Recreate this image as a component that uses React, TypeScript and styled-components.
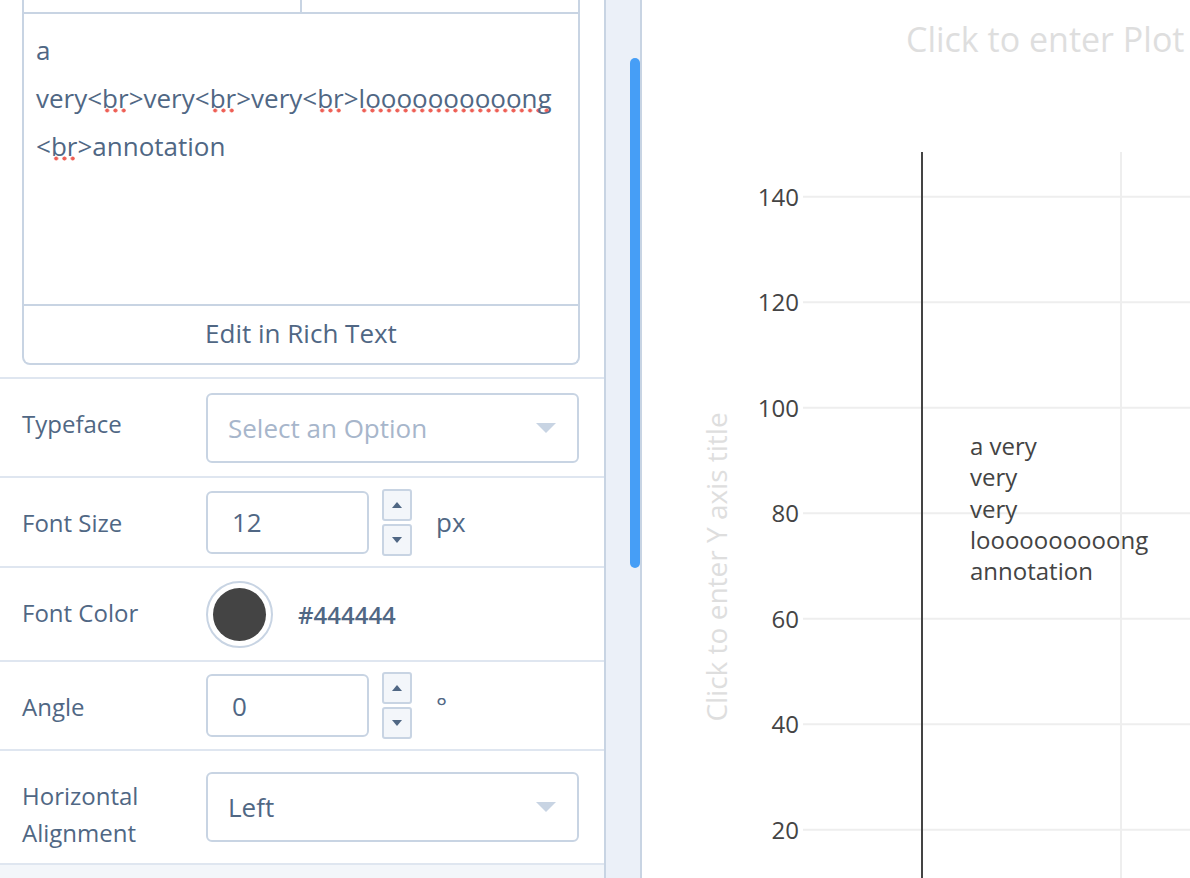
import React from "react";
import styled, { createGlobalStyle } from "styled-components";

const GlobalStyle = createGlobalStyle`
  html, body { margin: 0; padding: 0; height: 100%; overflow: hidden; background: #fff; }
  body { font-family: "Open Sans", "Liberation Sans", Arial, sans-serif; }
  #root { height: 100%; }
  *, *::before, *::after { box-sizing: border-box; }
`;

const Page = styled.div`
  display: flex;
  width: 1190px;
  height: 878px;
  overflow: hidden;
`;

const Panel = styled.div`
  width: 606px;
  flex: none;
  display: flex;
  flex-direction: column;
  background: #fff;
  border-right: 2px solid #c8d4e3;
  overflow: hidden;
  color: #506784;
`;

const Track = styled.div`
  width: 36px;
  flex: none;
  display: flex;
  justify-content: flex-end;
  padding-top: 58px;
  background: #ebf0f8;
  border-right: 2px solid #c8d4e3;
`;

const Thumb = styled.div`
  width: 10px;
  height: 510px;
  border-radius: 5px;
  background: #469ef6;
`;

const TextBox = styled.div`
  margin: 0 24px 0 22px;
  display: flex;
  flex-direction: column;
  border: 2px solid #c8d4e3;
  border-top: none;
  border-radius: 0 0 8px 8px;
`;

const Tabs = styled.div`
  display: flex;
  height: 14px;
  border-bottom: 2px solid #c8d4e3;
`;

const Tab = styled.div`
  flex: 1;
  & + & {
    border-left: 2px solid #c8d4e3;
  }
`;

const TextArea = styled.div`
  height: 290px;
  padding: 12px 12px;
  font-size: 26px;
  line-height: 48px;
  color: #506784;
  background: #fff;
`;

const Misspelled = styled.span`
  background-image: radial-gradient(circle at center, #ee5f55 0, #ee5f55 1.7px, rgba(238, 95, 85, 0) 2.3px);
  background-size: 8.3px 5px;
  background-repeat: repeat-x;
  background-position: 1px calc(100% - 3px);
`;

const RichButton = styled.div`
  height: 59px;
  padding-bottom: 3px;
  display: flex;
  align-items: center;
  justify-content: center;
  font-size: 26px;
  color: #506784;
  border-top: 2px solid #c8d4e3;
`;

const Fields = styled.div`
  margin-top: 12px;
  border-top: 2px solid #dfe6f0;
  display: flex;
  flex-direction: column;
`;

const Row = styled.div`
  display: flex;
  align-items: flex-start;
  padding: 0 25px 0 22px;
  border-bottom: 2px solid #dfe6f0;
`;

const Label = styled.div`
  width: 184px;
  flex: none;
  padding-top: 25.5px;
  font-size: 24px;
  line-height: 37px;
  color: #506784;
`;

const Field = styled.div<{ $py: number }>`
  flex: 1;
  align-self: center;
  display: flex;
  align-items: center;
  padding: ${(p) => p.$py}px 0;
`;

const Select = styled.div<{ $placeholder?: boolean }>`
  flex: 1;
  height: 70px;
  display: flex;
  align-items: center;
  justify-content: space-between;
  padding: 0 21px 0 20px;
  border: 2px solid #c8d4e3;
  border-radius: 6px;
  font-size: 26px;
  color: ${(p) => (p.$placeholder ? "#a7b6cb" : "#506784")};
`;

const NumberInput = styled.div`
  width: 163px;
  height: 63px;
  display: flex;
  align-items: center;
  padding-left: 24px;
  border: 2px solid #c8d4e3;
  border-radius: 6px;
  font-size: 26px;
  color: #506784;
`;

const Steppers = styled.div`
  margin-left: 13px;
  display: flex;
  flex-direction: column;
  gap: 3px;
`;

const StepButton = styled.div`
  width: 30px;
  height: 32px;
  display: flex;
  align-items: center;
  justify-content: center;
  background: #f3f6fa;
  border: 2px solid #c8d4e3;
  border-radius: 3px;
`;

const Unit = styled.div`
  margin-left: 24px;
  font-size: 26px;
  color: #506784;
`;

const Swatch = styled.div`
  width: 67px;
  height: 67px;
  padding: 5px;
  border: 2px solid #c8d4e3;
  border-radius: 50%;
  background: #fff;
`;

const SwatchFill = styled.div<{ $color: string }>`
  width: 100%;
  height: 100%;
  border-radius: 50%;
  background: ${(p) => p.$color};
`;

const HexText = styled.div`
  margin-left: 25px;
  font-size: 24px;
  font-weight: 600;
  color: #506784;
`;

const Footer = styled.div`
  flex: 1;
  background: #f3f6fa;
`;

const PlotArea = styled.div`
  flex: 1;
  background: #fff;
  overflow: hidden;
`;

const Caret = () => (
  <svg width="20" height="10" viewBox="0 0 20 10">
    <polygon points="0,0 20,0 10,10" fill="#c8d4e3" />
  </svg>
);

const Arrow = ({ up }: { up?: boolean }) => (
  <svg width="10" height="6" viewBox="0 0 10 6">
    <polygon points={up ? "0,6 10,6 5,0" : "0,0 10,0 5,6"} fill="#506784" />
  </svg>
);

const Stepper = () => (
  <Steppers>
    <StepButton>
      <Arrow up />
    </StepButton>
    <StepButton>
      <Arrow />
    </StepButton>
  </Steppers>
);

const LONG = "l" + "o".repeat(10) + "ng";
const yOf = (v: number) => 407.7 + (100 - v) * 5.275;
const ticks = [140, 120, 100, 80, 60, 40, 20];
const annotation = ["a very", "very", "very", LONG, "annotation"];
const FONT = '"Open Sans", verdana, arial, sans-serif';

const Plot = () => (
  <svg width="548" height="878" viewBox="0 0 548 878">
    <text x="264" y="52" fontFamily={FONT} fontSize="34" fill="#dedede">
      Click to enter Plot title
    </text>
    <text
      transform="translate(85,567) rotate(-90)"
      textAnchor="middle"
      fontFamily={FONT}
      fontSize="28"
      fill="#dedede"
    >
      Click to enter Y axis title
    </text>
    {ticks.map((t) => (
      <line key={`g${t}`} x1="161" x2="548" y1={yOf(t)} y2={yOf(t)} stroke="#eeeeee" strokeWidth="2" />
    ))}
    <line x1="479" x2="479" y1="152" y2="878" stroke="#eeeeee" strokeWidth="2" />
    <line x1="280" x2="280" y1="152" y2="878" stroke="#444444" strokeWidth="2" />
    {ticks.map((t) => (
      <text key={`t${t}`} x="157" y={yOf(t) + 9} textAnchor="end" fontFamily={FONT} fontSize="24" fill="#444">
        {t}
      </text>
    ))}
    {annotation.map((line, i) => (
      <text key={i} x="328" y={455 + i * 31.3} fontFamily={FONT} fontSize="24" fill="#444">
        {line}
      </text>
    ))}
  </svg>
);

export default function App() {
  return (
    <>
      <GlobalStyle />
      <Page>
        <Panel>
          <TextBox>
            <Tabs>
              <Tab />
              <Tab />
            </Tabs>
            <TextArea>
              <div>a</div>
              <div>
                very&lt;<Misspelled>br</Misspelled>&gt;very&lt;<Misspelled>br</Misspelled>&gt;very&lt;
                <Misspelled>br</Misspelled>&gt;<Misspelled>{LONG}</Misspelled>
              </div>
              <div>
                &lt;<Misspelled>br</Misspelled>&gt;annotation
              </div>
            </TextArea>
            <RichButton>Edit in Rich Text</RichButton>
          </TextBox>
          <Fields>
            <Row>
              <Label>Typeface</Label>
              <Field $py={13.5}>
                <Select $placeholder>
                  <span>Select an Option</span>
                  <Caret />
                </Select>
              </Field>
            </Row>
            <Row>
              <Label>Font Size</Label>
              <Field $py={10.5}>
                <NumberInput>12</NumberInput>
                <Stepper />
                <Unit>px</Unit>
              </Field>
            </Row>
            <Row>
              <Label>Font Color</Label>
              <Field $py={12.5}>
                <Swatch>
                  <SwatchFill $color="#444444" />
                </Swatch>
                <HexText>#444444</HexText>
              </Field>
            </Row>
            <Row>
              <Label>Angle</Label>
              <Field $py={10}>
                <NumberInput>0</NumberInput>
                <Stepper />
                <Unit>°</Unit>
              </Field>
            </Row>
            <Row>
              <Label>
                Horizontal
                <br />
                Alignment
              </Label>
              <Field $py={21}>
                <Select>
                  <span>Left</span>
                  <Caret />
                </Select>
              </Field>
            </Row>
          </Fields>
          <Footer />
        </Panel>
        <Track>
          <Thumb />
        </Track>
        <PlotArea>
          <Plot />
        </PlotArea>
      </Page>
    </>
  );
}
